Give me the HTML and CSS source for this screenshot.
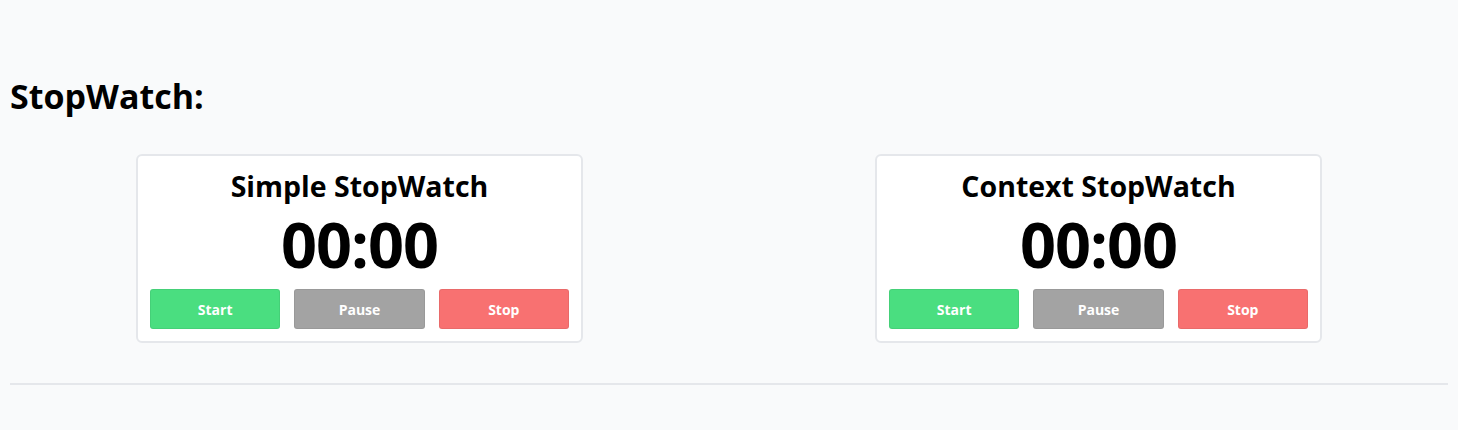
FILE: index.html
```html
<!DOCTYPE html>
<html>
<head>
<meta charset="utf-8">
<link rel="stylesheet" href="styles.css">
</head>
<body>
<main class="page">
  <h1 class="page-title">StopWatch:</h1>
  <section class="watches">
    <div class="card">
      <h2 class="card-title">Simple StopWatch</h2>
      <div class="time">00:00</div>
      <div class="actions">
        <button class="btn btn-start">Start</button>
        <button class="btn btn-pause">Pause</button>
        <button class="btn btn-stop">Stop</button>
      </div>
    </div>
    <div class="card">
      <h2 class="card-title">Context StopWatch</h2>
      <div class="time">00:00</div>
      <div class="actions">
        <button class="btn btn-start">Start</button>
        <button class="btn btn-pause">Pause</button>
        <button class="btn btn-stop">Stop</button>
      </div>
    </div>
  </section>
  <hr class="divider">
</main>
</body>
</html>
```
FILE: styles.css
```css
html, body {
  margin: 0;
  padding: 0;
  background: #f9fafb;
}
body {
  font-family: "Open Sans", "Noto Sans", sans-serif;
  color: #000;
}
.page {
  padding: 0 10px;
}
.page-title {
  margin: 0;
  padding-top: 74px;
  font-size: 34px;
  line-height: 44px;
  font-weight: 700;
}
.watches {
  display: flex;
  justify-content: center;
  gap: 292px;
  margin-top: 36px;
}
.card {
  box-sizing: border-box;
  width: 447px;
  height: 189px;
  background: #fff;
  border: 2px solid #e5e7eb;
  border-radius: 6px;
  padding: 12px 12px 12px;
  display: flex;
  flex-direction: column;
  align-items: stretch;
}
.card-title {
  margin: 0;
  text-align: center;
  font-size: 28.5px;
  line-height: 36px;
  font-weight: 700;
}
.time {
  text-align: center;
  font-size: 63px;
  line-height: 80px;
  font-weight: 700;
  letter-spacing: -1px;
}
.actions {
  display: flex;
  gap: 14px;
  margin-top: auto;
}
.btn {
  flex: 1;
  height: 40px;
  border: 1px solid rgba(0,0,0,0.06);
  border-radius: 3px;
  color: #fff;
  font-family: "Open Sans", "Noto Sans", sans-serif;
  font-size: 14px;
  font-weight: 700;
  padding: 0;
}
.btn-start { background: #4ade80; }
.btn-pause { background: #a3a3a3; }
.btn-stop { background: #f87171; }
.divider {
  margin: 40px 0 0;
  border: 0;
  height: 2px;
  background: #e5e7eb;
}
```
